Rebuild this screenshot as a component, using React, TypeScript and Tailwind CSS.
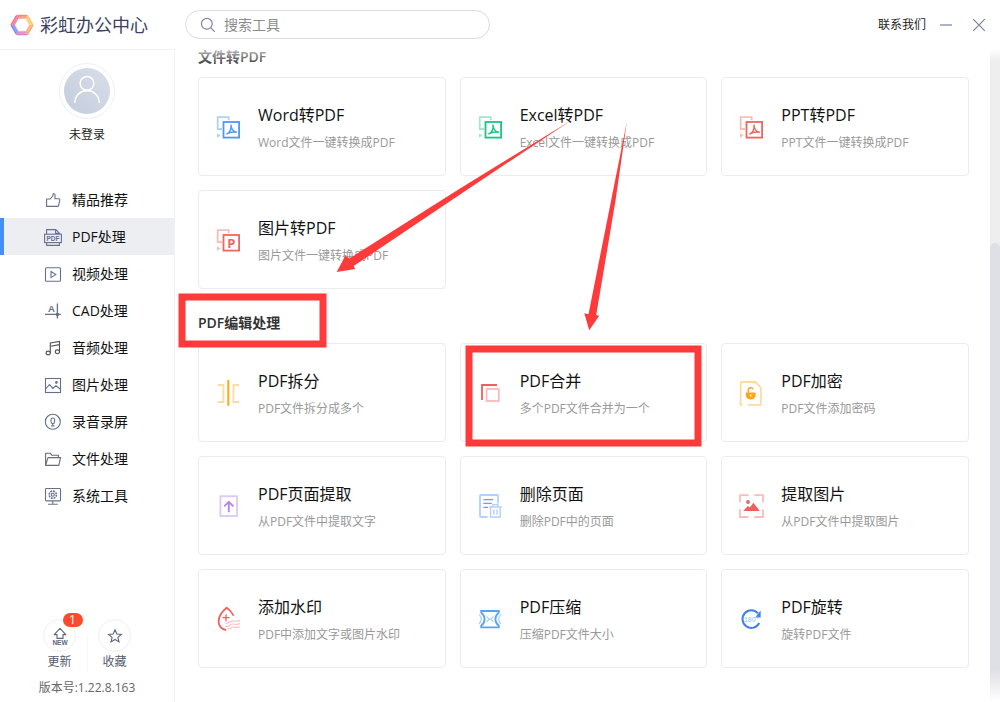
import React, { useState } from 'react';

type IconProps = { children: React.ReactNode };

// 18px line icon used in the side menu
function MenuIcon({ children }: IconProps) {
  return (
    <svg viewBox="0 0 18 18" className="w-[18px] h-[18px] shrink-0" fill="none" stroke="#66708c" strokeWidth="1.1" aria-hidden="true">
      {children}
    </svg>
  );
}

// 26px two-tone icon used on the tool cards
function ToolIcon({ children }: IconProps) {
  return (
    <svg viewBox="0 0 26 26" className="w-[26px] h-[26px] shrink-0" fill="none" strokeWidth="1.8" aria-hidden="true">
      {children}
    </svg>
  );
}

function ConvertIcon({ color, light, letter }: { color: string; light: string; letter?: string }) {
  return (
    <ToolIcon>
      <path d="M6 15H1.7V3.2h11v3" stroke={light} />
      <path d="M1 19.2l3.6 2.3L1 23.8z" fill={light} />
      <rect x="7.5" y="8" width="15.6" height="15.6" stroke={color} />
      {letter ? (
        <text x="15.3" y="20.6" textAnchor="middle" fontSize="13" fontWeight="700" fill={color} fontFamily="Open Sans, sans-serif">{letter}</text>
      ) : (
        <path d="M10.4 20.2c3.2-1.4 5-5 4.6-9.2.1 3.8 1.9 6.4 5.4 7.2-3.2-.6-6.6-.2-10 2" stroke={color} strokeWidth="1.4" strokeLinejoin="round" />
      )}
    </ToolIcon>
  );
}

const menu = [
  { label: '精品推荐', icon: <path d="M2.6 8v7.4h10.9c.6 0 1-.3 1.1-.8l1.2-5.7c.1-.7-.3-1.2-1-1.2H11V4.2c0-1.2-1-1.7-1.8-1.5L8.8 5 6.2 8z" strokeLinejoin="round" /> },
  {
    label: 'PDF处理',
    icon: (
      <>
        <path d="M2.6 6V1.6h9.2l3.6 3.6V6M11.6 1.6v3.8h3.8M2.6 14.8v2.6h12.8v-2.6" />
        <rect x=".6" y="6.2" width="16.8" height="8.4" />
        <text x="9" y="12.8" textAnchor="middle" fontSize="6.5" fontWeight="700" fill="#66708c" stroke="none" fontFamily="Liberation Sans, sans-serif">PDF</text>
      </>
    ),
  },
  {
    label: '视频处理',
    icon: (
      <>
        <rect x="1.5" y="2.8" width="15" height="13.4" rx="1" />
        <path d="M7 6.6v6l4.8-3z" />
      </>
    ),
  },
  {
    label: 'CAD处理',
    icon: (
      <>
        <path d="M13.4 1.4v15.2M1 12.4h15.8" strokeWidth="1.3" />
        <circle cx="13.4" cy="12.4" r="1.2" fill="#66708c" />
        <text x="7.4" y="10" textAnchor="middle" fontSize="9.5" fontWeight="700" fill="#66708c" stroke="none" fontFamily="Liberation Sans, sans-serif">A</text>
      </>
    ),
  },
  {
    label: '音频处理',
    icon: (
      <g stroke="#555">
        <path d="M6.3 14V4l9.2-1.6v10M6.3 7.2l9.2-1.6" />
        <ellipse cx="4.2" cy="14" rx="2.1" ry="1.9" />
        <ellipse cx="13.4" cy="12.8" rx="2.1" ry="1.9" />
      </g>
    ),
  },
  {
    label: '图片处理',
    icon: (
      <>
        <rect x="1.5" y="2.5" width="15" height="14" />
        <path d="M1.5 13l4-4.4 3.4 3.8 3-2.6 4.6 3.4" />
        <circle cx="12.4" cy="6.4" r=".8" fill="#66708c" />
      </>
    ),
  },
  {
    label: '录音录屏',
    icon: (
      <>
        <circle cx="8.8" cy="8.8" r="7.5" />
        <rect x="7" y="5" width="3.6" height="5.6" rx="1.8" />
        <path d="M8.8 10.6v2.4M7 13h3.6" />
      </>
    ),
  },
  {
    label: '文件处理',
    icon: <path d="M1.6 15.4V3.2h4.6l1.6 2h6.6v2.4M1.6 15.4l2.4-7.8h12.6l-1.8 7.8z" stroke="#666c7c" strokeLinejoin="round" />,
  },
  {
    label: '系统工具',
    icon: (
      <>
        <rect x="1.5" y="1.5" width="15" height="12.4" rx=".8" />
        <circle cx="8.8" cy="7.7" r="3.6" strokeDasharray="1.9 .9" strokeWidth="1.6" />
        <circle cx="8.8" cy="7.7" r="1.5" />
        <path d="M8.8 14v3M4 17.2h9.8" />
      </>
    ),
  },
];

const sections = [
  {
    title: '文件转PDF',
    tools: [
      { name: 'Word转PDF', desc: 'Word文件一键转换成PDF', icon: <ConvertIcon color="#4a9afa" light="#acd2fc" /> },
      { name: 'Excel转PDF', desc: 'Excel文件一键转换成PDF', icon: <ConvertIcon color="#16c784" light="#a5e6cc" /> },
      { name: 'PPT转PDF', desc: 'PPT文件一键转换成PDF', icon: <ConvertIcon color="#f0655f" light="#f9bebc" /> },
      { name: '图片转PDF', desc: '图片文件一键转换成PDF', icon: <ConvertIcon color="#f0655f" light="#f9bebc" letter="P" /> },
    ],
  },
  {
    title: 'PDF编辑处理',
    tools: [
      {
        name: 'PDF拆分',
        desc: 'PDF文件拆分成多个',
        icon: (
          <ToolIcon>
            <path d="M1.8 5h5.6v17H1.8M23 5h-5.6v17H23" stroke="#ffdba3" />
            <path d="M12.3 0v25.8" stroke="#ffaa12" strokeWidth="2" />
          </ToolIcon>
        ),
      },
      {
        name: 'PDF合并',
        desc: '多个PDF文件合并为一个',
        icon: (
          <ToolIcon>
            <path d="M4 20V5h15" stroke="#f0605a" />
            <rect x="8.6" y="9" width="12.2" height="12" stroke="#f9bcba" />
          </ToolIcon>
        ),
      },
      {
        name: 'PDF加密',
        desc: 'PDF文件添加密码',
        icon: (
          <ToolIcon>
            <path d="M3.6 24.8H1.6V3c0-.6.4-1 1-1h13.8l5.4 5.6v17.2H8.8" stroke="#ffdba3" />
            <path d="M6.8 12.4h9.8v2.8a4.9 4.2 0 0 1-9.8 0z" fill="#ffa51a" />
            <path d="M9.2 12.6V10a2.5 2.5 0 0 1 4.8-.8" stroke="#ffa51a" strokeWidth="1.5" />
            <path d="M11.7 14.4v2" stroke="#fff" strokeWidth="1.2" />
          </ToolIcon>
        ),
      },
      {
        name: 'PDF页面提取',
        desc: '从PDF文件中提取文字',
        icon: (
          <ToolIcon>
            <rect x="4.4" y="3.2" width="16.6" height="19.8" stroke="#dcc8f9" />
            <path d="M12.8 19.2V9M8.2 13.4l4.6-4.6 4.6 4.6" stroke="#b184f2" />
          </ToolIcon>
        ),
      },
      {
        name: '删除页面',
        desc: '删除PDF中的页面',
        icon: (
          <ToolIcon>
            <path d="M20 10.4V3c0-.6-.4-1-1-1H3c-.6 0-1 .4-1 1v20c0 .6.4 1 1 1h6.6" stroke="#add3fd" />
            <path d="M5.4 6.6h10M5.4 10.4h8.4M5.4 14.4h4.6" stroke="#5aa5fb" strokeWidth="1.2" />
            <path d="M11 14h12.8M15 13.6v-2h4.8v2M12.6 14.2v9.8h9.6v-9.8M15.8 16.4v5.4M19 16.4v5.4" stroke="#add3fd" strokeWidth="1.4" />
          </ToolIcon>
        ),
      },
      {
        name: '提取图片',
        desc: '从PDF文件中提取图片',
        icon: (
          <ToolIcon>
            <path d="M1 9.6V2.2h8.6M15.2 2.2H24v7.4M24 16.2V24h-8.8M9.6 24H1v-7.8" stroke="#f9bebc" />
            <circle cx="9" cy="9" r="1.9" fill="#f0605a" />
            <path d="M4.2 18l4.6-5 2 1.4 3.6-4.6L20.8 18z" fill="#f0605a" />
          </ToolIcon>
        ),
      },
      {
        name: '添加水印',
        desc: 'PDF中添加文字或图片水印',
        icon: (
          <ToolIcon>
            <path d="M17.6 9.6C15.8 6.4 13.4 3.6 10.7 1.8 6.2 5.4 2.6 10.4 2.6 15.6c0 4.6 3.2 8 7.6 8.4" stroke="#f0605a" />
            <path d="M10 8.2v7M6.5 11.7h7" stroke="#f0605a" strokeWidth="1.3" />
            <path d="M9.4 17c3.2 1.4 4.8-2.6 8-2.2 2.6.2 3.8 1 6.6-.4M9.4 20.2c3.2 1.4 4.8-2.6 8-2.2 2.6.2 3.8 1 6.6-.4M11.8 22.8c2.4.4 3.6-2 5.8-1.8 2.6.2 3.6 1 6.4-.2" stroke="#f9bebc" strokeWidth="1.2" />
          </ToolIcon>
        ),
      },
      {
        name: 'PDF压缩',
        desc: '压缩PDF文件大小',
        icon: (
          <ToolIcon>
            <path d="M3.2 5h17.6v1.6c-2 1.6-3.4 3.8-3.4 6.6s1.400 5 3.400 6.600v1.600H3.200v-1.600c2-1.600 3.400-3.800 3.400-6.600S5.200 8.200 3.200 6.600z" stroke="#55a2fb" />
            <path d="M1.2 8.400c2.600 3 2.600 6.600 0 9.600M22.800 8.400c-2.600 3-2.600 6.600 0 9.600M8.600 10.400l2.400 2.800-2.400 2.800M15.400 10.400L13 13.200l2.400 2.800M10.800 13.200h2.400" stroke="#add3fd" strokeWidth="1.300" />
          </ToolIcon>
        ),
      },
      {
        name: 'PDF旋转',
        desc: '旋转PDF文件',
        icon: (
          <ToolIcon>
            <path d="M19 7.4A8.8 8.8 0 1 0 20.2 17" stroke="#3f7ff0" strokeWidth="2" />
            <path d="M21.600 4.600v7h-5.400z" fill="#3f7ff0" />
            <text x="12.2" y="15.8" textAnchor="middle" fontSize="7" fill="#8fc0fc" fontFamily="Liberation Sans, sans-serif">180°</text>
          </ToolIcon>
        ),
      },
    ],
  },
];

function Logo() {
  const blades = ['#fb9168', '#fdc766', '#f9a76f', '#e07cc4', '#7f86f2', '#f0708f'];
  return (
    <svg viewBox="-12 -12 24 24" className="w-6 h-6 shrink-0" aria-hidden="true">
      {blades.map((c, i) => (
        <g key={c} transform={`rotate(${i * 60})`}>
          <path d="M-5.800 -10.200H5L8.600 -4.900L3.600 -6.200H-3.600z" fill={c} />
          <path d="M-5 -8.600L6.600 -8M-4.200 -7.200L7.400 -6.400" stroke="#fff" strokeWidth=".5" opacity=".6" />
        </g>
      ))}
    </svg>
  );
}

function Header() {
  return (
    <header className="flex items-center h-[49px] shrink-0">
      <div className="flex items-center gap-1.5 w-[175px] pl-[10px] shrink-0">
        <Logo />
        <h1 className="text-[18px] leading-6 text-[#3b4261] whitespace-nowrap">彩虹办公中心</h1>
      </div>
      <label className="ml-[10px] flex items-center gap-2 w-[305px] h-[29px] pl-3.5 pr-4 rounded-full border border-[#d9dae0]">
        <svg viewBox="0 0 16 16" className="w-4 h-4 shrink-0" fill="none" stroke="#7f88a3" strokeWidth="1.2" aria-hidden="true">
          <circle cx="6.8" cy="6.8" r="5.4" />
          <path d="M10.8 10.8l4 4" />
        </svg>
        <input type="text" placeholder="搜索工具" aria-label="搜索工具" className="flex-1 min-w-0 text-[14px] leading-5 bg-transparent outline-none placeholder:text-[#8c8c8c]" />
      </label>
      <div className="ml-auto flex items-center gap-3.5 pr-3.5">
        <a href="#contact" className="text-[12px] leading-5 text-[#222]">联系我们</a>
        <button aria-label="最小化">
          <svg viewBox="0 0 12 12" className="w-3 h-3" stroke="#7a829a" strokeWidth="1.2"><path d="M0 6h12" /></svg>
        </button>
        <button aria-label="关闭" className="ml-1.5">
          <svg viewBox="0 0 14 14" className="w-3.5 h-3.5" stroke="#7a829a" strokeWidth="1.2"><path d="M1.2 1.2l11.6 11.6M12.8 1.2L1.2 12.8" /></svg>
        </button>
      </div>
    </header>
  );
}

function Sidebar() {
  const [active, setActive] = useState('PDF处理');

  return (
    <aside className="flex flex-col w-[175px] shrink-0 border-t border-r border-[#f1f1f4]">
      <div className="flex flex-col items-center pt-[13px]">
        <div className="w-14 h-14 rounded-full border border-[#eef0f6] p-1">
          <svg viewBox="0 0 48 48" className="w-full h-full" fill="none" aria-hidden="true">
            <defs>
              <linearGradient id="avatar" x1="1" y1="0" x2="0" y2="1">
                <stop offset="0" stopColor="#d9dde8" />
                <stop offset="1" stopColor="#c3cddd" />
              </linearGradient>
            </defs>
            <circle cx="24" cy="24" r="24" fill="url(#avatar)" />
            <circle cx="24" cy="16" r="7.2" stroke="#fff" strokeWidth="1.6" />
            <path d="M11.2 36.6c0-7.4 5.4-13 12.8-13s12.8 5.6 12.8 13" stroke="#fff" strokeWidth="1.6" />
          </svg>
        </div>
        <span className="mt-1.5 text-[12px] leading-5 text-[#222]">未登录</span>
      </div>

      <nav className="mt-9 flex flex-col">
        {menu.map(item => (
          <button
            key={item.label}
            onClick={() => setActive(item.label)}
            className={`flex items-center gap-2.5 h-[37px] pl-10 border-l-4 text-[14px] leading-5 text-[#111] ${active === item.label ? 'border-[#4390fb] bg-[#edeef1]' : 'border-transparent'}`}
          >
            <MenuIcon>{item.icon}</MenuIcon>
            {item.label}
          </button>
        ))}
      </nav>

      <div className="mt-auto pb-1">
        <div className="flex justify-center text-[12px] leading-5 text-[#555b6e]">
          <button className="relative flex flex-col items-center w-[54px]">
            <span className="flex items-center justify-center w-[33px] h-[33px] rounded-full border border-[#f0f0f2]">
              <svg viewBox="0 0 18 20" className="w-[18px] h-5" fill="none" stroke="#5c6684" strokeWidth="1.1" aria-hidden="true">
                <path d="M9 2.4L3.2 8.6H6v3.8h6V8.6h2.8z" strokeLinejoin="round" />
                <text x="9" y="18.6" textAnchor="middle" fontSize="6.5" fontWeight="700" fill="#5c6684" stroke="none" fontFamily="Liberation Sans, sans-serif">NEW</text>
              </svg>
            </span>
            <span className="absolute -top-1.5 right-1 w-5 h-3.5 rounded-full bg-[#fb4b2f] text-white leading-[14px]">1</span>
            <span>更新</span>
          </button>
          <span className="w-px h-9 self-end bg-[#f7f7f8]" />
          <button className="flex flex-col items-center w-[54px]">
            <span className="flex items-center justify-center w-[33px] h-[33px] rounded-full border border-[#f0f0f2]">
              <svg viewBox="0 0 16 16" className="w-4 h-4" fill="none" stroke="#5c6684" strokeWidth="1.1" aria-hidden="true">
                <path d="M8 1.8l1.8 4.2 4.6.4-3.5 3 1.1 4.5L8 11.5l-4 2.4 1.1-4.5-3.5-3L6.2 6z" />
              </svg>
            </span>
            <span>收藏</span>
          </button>
        </div>
        <p className="mt-1.5 text-center text-[12px] leading-5 text-[#666]">版本号:1.22.8.163</p>
      </div>
    </aside>
  );
}

// red pen marks: two frames and the arrows that point at them
function Marks() {
  return (
    <svg viewBox="0 0 1000 702" className="absolute left-0 top-0 w-[1000px] h-[702px] pointer-events-none" fill="none" aria-hidden="true">
      <g stroke="#fe3a3a" strokeWidth="7">
        <rect x="182" y="297" width="141" height="47" />
        <rect x="469" y="349" width="229" height="94" />
      </g>
      <g fill="#fe3a3a">
        <path d="M571 120.5L460 188.4L349.500 258.400L345.300 255.700L336.700 271.900L355.200 269L353.700 266L460 194.400z" />
        <path d="M626.800 122L611.200 200L588.500 314.300L584.300 313.200L589.200 330.200L599.200 315.800L596.200 315L615.600 200z" />
      </g>
    </svg>
  );
}

export default function App() {
  return (
    <div className="relative flex flex-col min-h-screen bg-white overflow-hidden font-['Open_Sans','Noto_Sans_CJK_SC',sans-serif]">
      <Header />
      <div className="flex flex-1">
        <Sidebar />
        <main className="relative flex-1 min-w-0 pl-[23px] pr-[21px]">
          <div className="-mt-[26px] pb-[34px]">
            {sections.map(section => (
              <section key={section.title}>
                <h2 className="pt-6 pb-2.5 text-[14px] leading-5 font-semibold text-[#333]">{section.title}</h2>
                <div className="grid grid-cols-3 gap-3.5">
                  {section.tools.map(tool => (
                    <button key={tool.name} className="flex items-center gap-4 h-[99px] pl-[17px] pr-3 text-left rounded border border-[#ececee]">
                      {tool.icon}
                      <span className="flex flex-col gap-1.5 pt-0.5">
                        <span className="text-[16px] leading-6 text-[#111]">{tool.name}</span>
                        <span className="text-[12px] leading-5 text-[#999]">{tool.desc}</span>
                      </span>
                    </button>
                  ))}
                </div>
              </section>
            ))}
          </div>
          {/* the list fades out under the header */}
          <div className="absolute inset-x-0 top-0 h-4 bg-linear-to-b from-white/70 to-white/0" />
        </main>
        <div className="relative flex flex-col w-[10px] shrink-0 bg-[#eee]">
          <div className="mt-[194px] flex-1 rounded-t-full bg-[#dfe0e5]" />
          <div className="absolute inset-x-0 top-0 h-3 bg-linear-to-b from-white to-white/0" />
          <div className="absolute inset-x-0 bottom-0 h-8 bg-linear-to-t from-white to-white/0" />
        </div>
      </div>
      <Marks />
    </div>
  );
}
